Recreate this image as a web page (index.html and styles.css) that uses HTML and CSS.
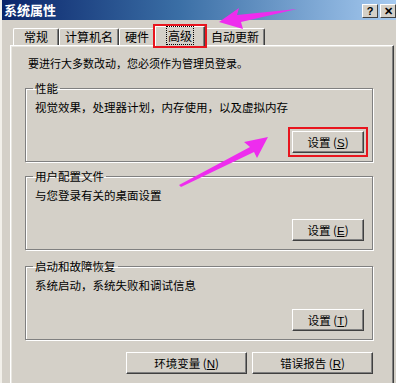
FILE: index.html
```html
<!DOCTYPE html>
<html lang="zh-CN">
<head>
<meta charset="utf-8">
<title>系统属性</title>
<link rel="stylesheet" href="styles.css">
</head>
<body>
<div class="window">
  <div class="titlebar">
    <span class="title">系统属性</span>
    <div class="tb-buttons">
      <span class="tb-btn">?</span>
      <span class="tb-btn">✕</span>
    </div>
  </div>
  <div class="tabs">
    <span class="tab tab-first">常规</span>
    <span class="tab">计算机名</span>
    <span class="tab">硬件</span>
    <span class="tab tab-active"><span class="focus">高级</span></span>
    <span class="tab">自动更新</span>
  </div>
  <div class="panel">
    <p class="intro">要进行大多数改动，您必须作为管理员登录。</p>
    <fieldset class="group">
      <legend>性能</legend>
      <p class="desc">视觉效果，处理器计划，内存使用，以及虚拟内存</p>
      <div class="btn-row"><button class="btn btn-set btn-marked">设置 (<u>S</u>)</button></div>
    </fieldset>
    <fieldset class="group group-2">
      <legend>用户配置文件</legend>
      <p class="desc">与您登录有关的桌面设置</p>
      <div class="btn-row"><button class="btn btn-set">设置 (<u>E</u>)</button></div>
    </fieldset>
    <fieldset class="group group-3">
      <legend>启动和故障恢复</legend>
      <p class="desc">系统启动，系统失败和调试信息</p>
      <div class="btn-row"><button class="btn btn-set">设置 (<u>T</u>)</button></div>
    </fieldset>
    <div class="bottom-row">
      <button class="btn btn-wide">环境变量 (<u>N</u>)</button>
      <button class="btn btn-wide">错误报告 (<u>R</u>)</button>
    </div>
  </div>
  <svg class="arrows" width="396" height="383" viewBox="0 0 396 383">
    <polygon points="219,22 239,8 237,15 297,9 241,22 243,29" fill="#ee2cee"/>
    <polygon points="268,137 244,142 250,147 179,185 181,187 254,152 257,158" fill="#ee2cee"/>
  </svg>
</div>
</body>
</html>
```

FILE: styles.css
```css
* { box-sizing: border-box; }
html, body { margin: 0; padding: 0; }
body {
  font-family: "Noto Sans CJK SC", "Liberation Sans", sans-serif;
  font-size: 11.5px;
  color: #000;
  background: #d4d0c8;
}
.window {
  position: relative;
  width: 396px;
  height: 383px;
  overflow: hidden;
  background: #d4d0c8;
  border-left: 2px solid #f2f0ea;
}
.titlebar {
  height: 20px;
  margin-left: -2px;
  background: linear-gradient(to right, #0a246a 0%, #3a6ea5 45%, #a6caf0 100%);
  display: flex;
  align-items: center;
  justify-content: space-between;
  padding: 0 0 0 4px;
}
.title {
  color: #fff;
  font-weight: bold;
  font-size: 13px;
  line-height: 16px;
}
.tb-buttons {
  display: flex;
  gap: 2px;
  align-self: flex-start;
  margin-top: 4px;
}
.tb-btn {
  width: 16px;
  height: 14px;
  background: #d4d0c8;
  border-top: 1px solid #fff;
  border-left: 1px solid #fff;
  border-right: 1px solid #404040;
  border-bottom: 1px solid #404040;
  font-family: "Liberation Sans", sans-serif;
  font-weight: bold;
  font-size: 11px;
  line-height: 12px;
  text-align: center;
}
.tabs {
  display: flex;
  align-items: flex-end;
  height: 19px;
  margin-top: 6px;
  padding-left: 11px;
  position: relative;
  z-index: 2;
}
.tab {
  height: 17px;
  padding: 0 5px;
  line-height: 15px;
  font-size: 12px;
  background: #d4d0c8;
  border-top: 1px solid #fff;
  border-left: 1px solid #fff;
  border-right: 1px solid #404040;
  border-radius: 2px 2px 0 0;
  box-shadow: inset -1px 0 0 #808080;
  white-space: nowrap;
}
.tab-first { padding: 0 10px; }
.tab-active {
  height: 20px;
  margin: 0 -1px -1px 0;
  padding: 1px 10px 0;
  position: relative;
  border-radius: 0;
  outline: 2px solid #e8151e;
  outline-offset: 0;
}
.tab-active + .tab { margin-left: 1px; }
.focus {
  border: 1px dotted #000;
  padding: 0 1px;
}
.panel {
  margin-left: 8px;
  width: 384px;
  height: 340px;
  border-top: 1px solid #fff;
  border-left: 1px solid #fff;
  border-right: 1px solid #404040;
  box-shadow: inset -1px 0 0 #808080, inset 1px 1px 0 #e8e6e0;
  padding: 9px 20px 0 14px;
  position: relative;
  z-index: 1;
}
.intro {
  margin: 0 0 0 3px;
  height: 16px;
  line-height: 16px;
  font-size: 11px;
}
.group {
  margin: 10px 0 0 0;
  height: 81px;
  padding: 0 8px 0 8px;
  border: 1px solid #808080;
  box-shadow: 1px 1px 0 #fff, inset 1px 1px 0 #fff;
  min-width: 0;
}
.group-2 { margin-top: 7px; }
.group-3 { margin-top: 9px; }
.group legend {
  padding: 0 2px;
  margin-left: -1px;
  height: 14px;
  line-height: 14px;
}
.desc {
  margin: 4px 0 0 1px;
  height: 16px;
  line-height: 16px;
}
.btn-row {
  display: flex;
  justify-content: flex-end;
  margin-top: 16px;
}
.btn {
  font-family: "Noto Sans CJK SC", "Liberation Sans", sans-serif;
  font-size: 11.5px;
  color: #000;
  height: 22px;
  background: #d4d0c8;
  border-top: 1px solid #fff;
  border-left: 1px solid #fff;
  border-right: 1px solid #404040;
  border-bottom: 1px solid #404040;
  box-shadow: inset -1px -1px 0 #808080;
  padding: 0;
  line-height: 18px;
}
.btn u { font-family: "Liberation Sans", sans-serif; }
.btn-set { width: 72px; }
.btn-marked {
  outline: 2px solid #e8151e;
  outline-offset: 2px;
}
.bottom-row {
  display: flex;
  justify-content: flex-end;
  gap: 5px;
  margin-top: 12px;
}
.btn-wide { width: 121px; }
.arrows {
  position: absolute;
  left: -2px;
  top: 0;
  z-index: 5;
  pointer-events: none;
}
```
